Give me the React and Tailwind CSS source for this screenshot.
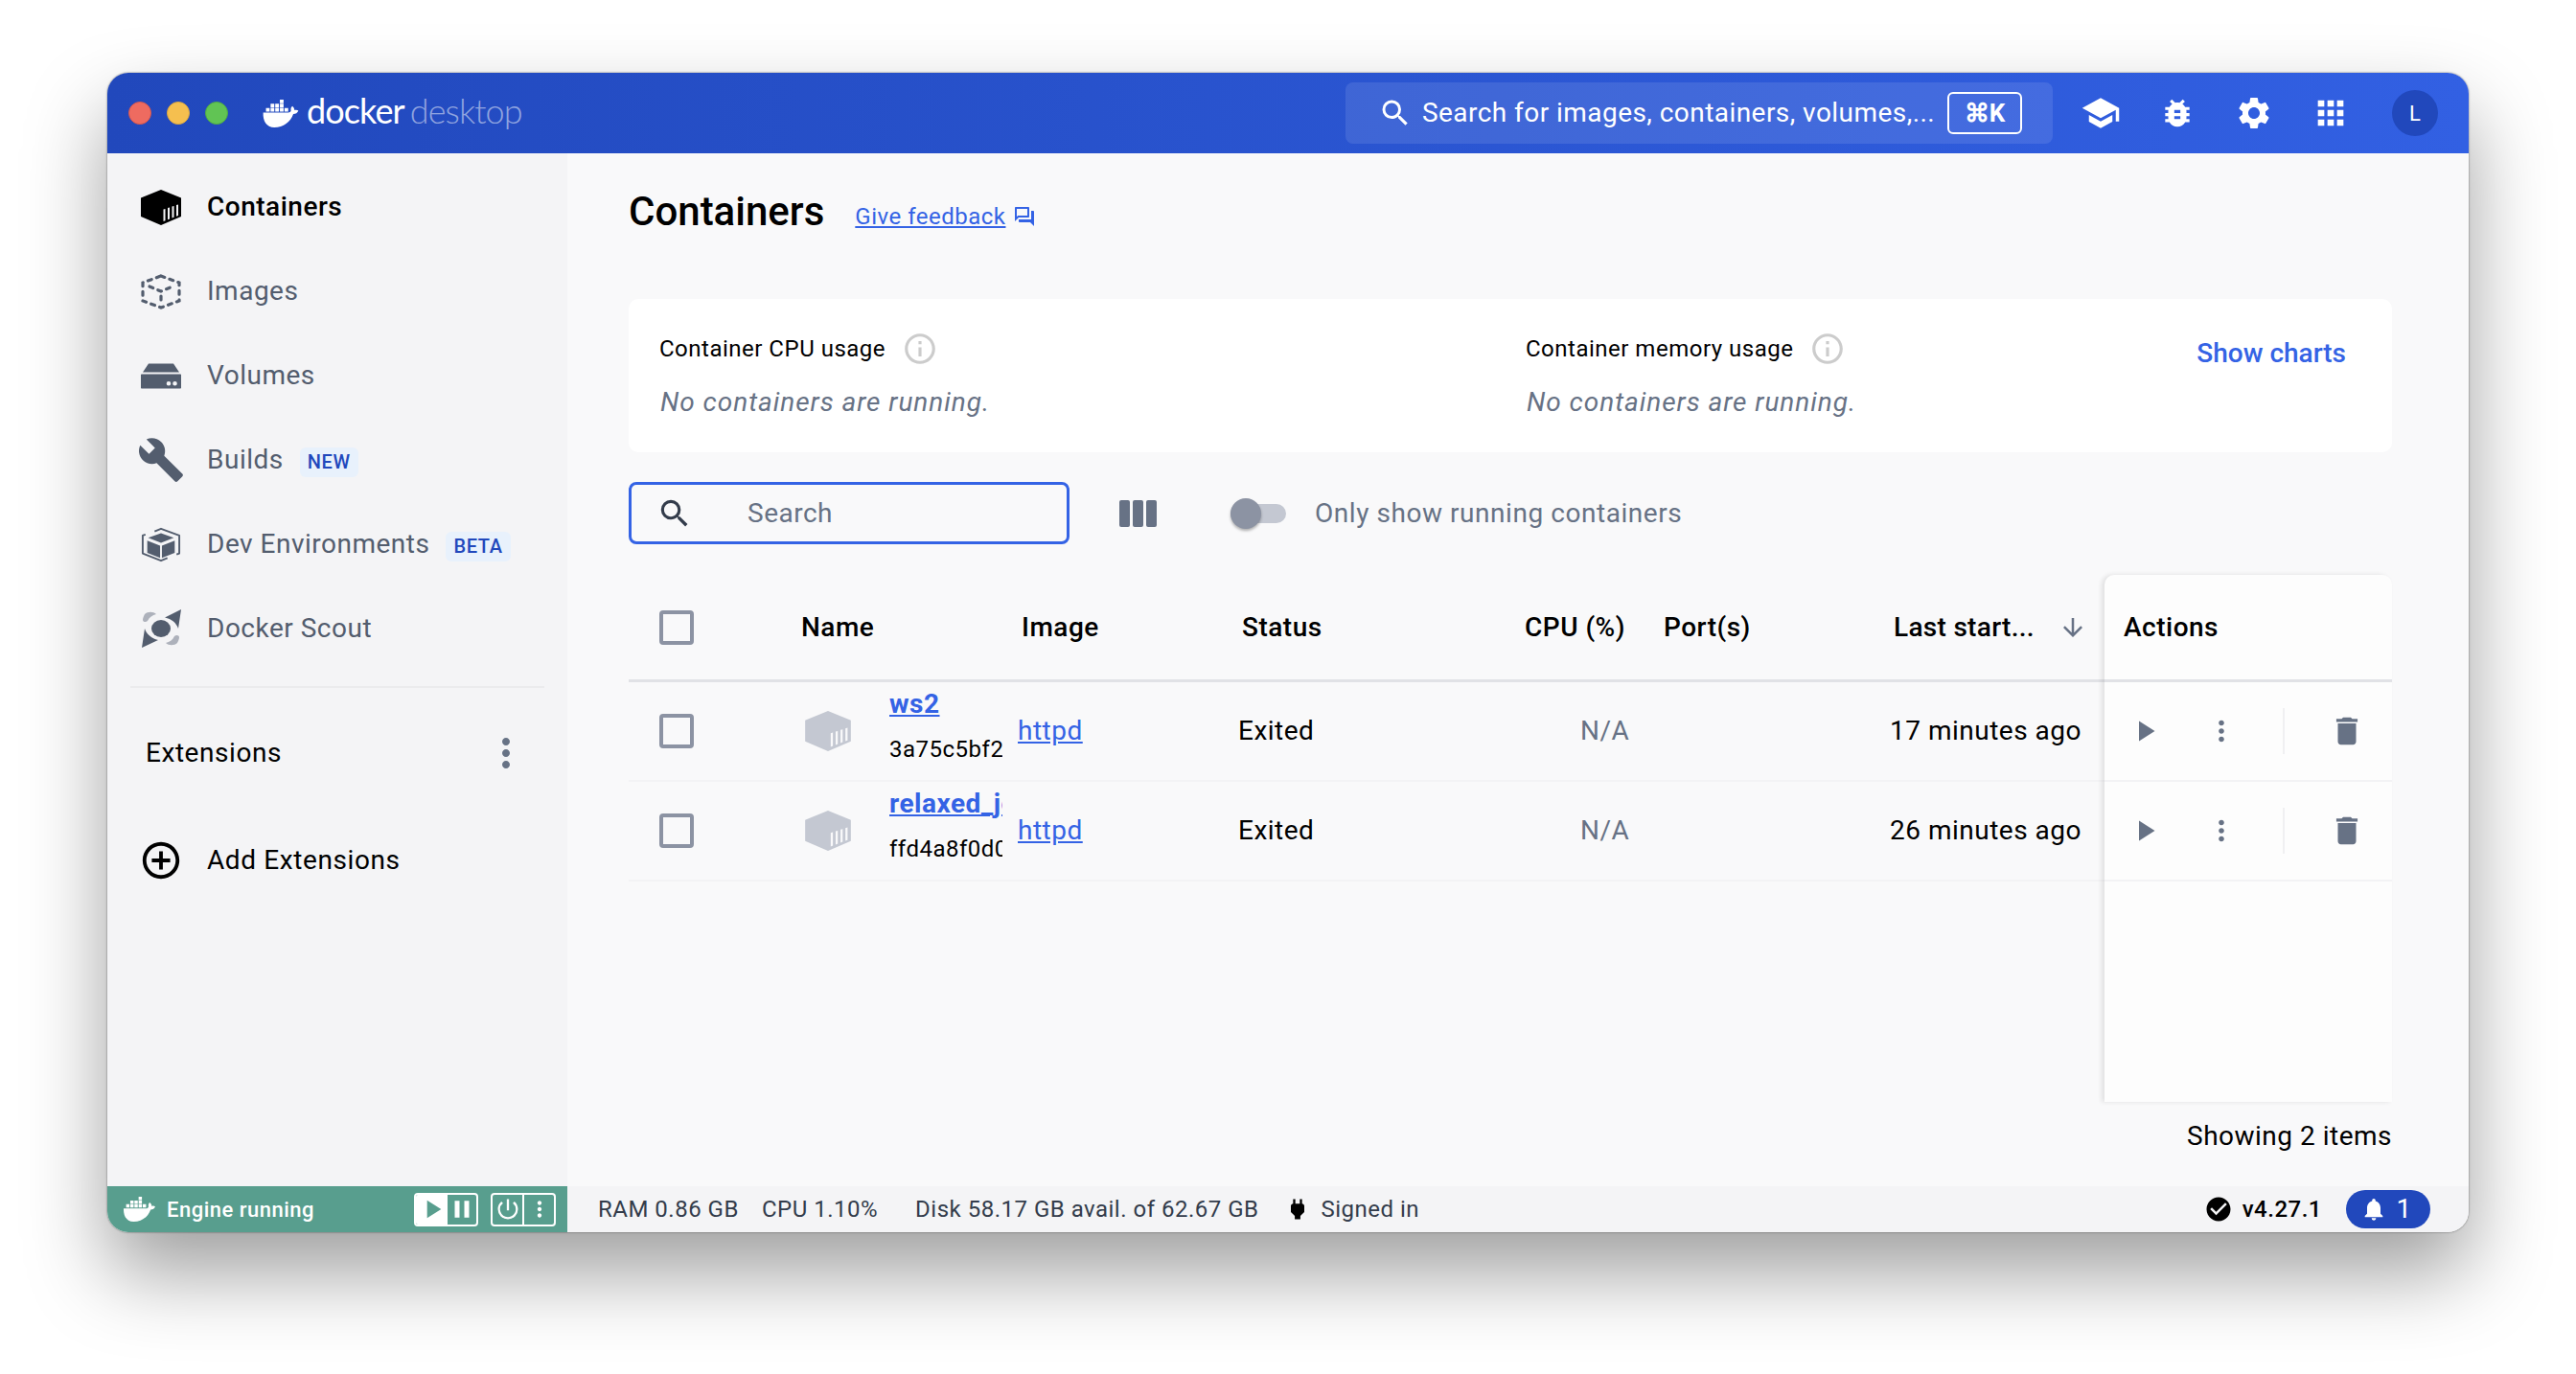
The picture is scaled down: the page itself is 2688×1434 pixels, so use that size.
import React from 'react';
import {
    MdSchool, MdBugReport, MdSettings, MdApps, MdSearch, MdBuild, MdMoreVert, MdAddCircleOutline,
    MdInfoOutline, MdOutlineForum, MdArrowDownward, MdPlayArrow, MdDelete, MdPause,
    MdPowerSettingsNew, MdPower, MdCheckCircle, MdNotifications
} from 'react-icons/md';

const ROWS = [
    { name: 'ws2', id: '3a75c5bf2', image: 'httpd', time: '17 minutes ago' },
    { name: 'relaxed_jones', id: 'ffd4a8f0d0c', image: 'httpd', time: '26 minutes ago' }
];

const COLS = 'grid grid-cols-[176px_230px_230px_294px_146px_238px_226px]';

function Whale({ className }) {
    return (
        <svg viewBox="0 0 40 30" className={className} fill="currentColor">
            <path d="M1 14h27c1.500 0 2.500-.5 3-2-.5-2 0-4 1.500-5 1.500 1.300 2.300 2.800 2.300 4.500 1.300-.6 2.800-.6 4.200.3-1 2.400-3 3.700-5.500 3.700C30.500 24 23 30 13 30 4.500 30 .5 23 1 14z" />
            <path d="M4 9h4v4H4zM9 9h4v4H9zM14 9h4v4h-4zM19 9h4v4h-4zM24 9h4v4h-4zM9 4.500h4v4H9zM14 4.500h4v4h-4zM19 4.500h4v4h-4zM19 0h4v4h-4z" />
        </svg>
    );
}

function ContainerIcon({ className, stripe }) {
    return (
        <svg viewBox="0 0 42 37" className={className}>
            <path d="M21 0l21 8.500V28L21 37 0 28V8.500z" fill="currentColor" />
            <path d="M23.500 33V20.500l2-.6V32.200zM28 31.300V19l2-.6V30.500zM32.500 29.500V17.500l2-.6V28.700zM37 27.700V16l2-.6V27z" fill={stripe} />
        </svg>
    );
}

function ImagesIcon({ className }) {
    return (
        <svg viewBox="0 0 42 37" className={className} fill="none" stroke="currentColor" strokeWidth="3.200" strokeLinecap="round" strokeDasharray="4 5.500">
            <path d="M21 2l19 7v19l-19 7-19-7V9z" />
            <path d="M9 13l12 5 12-5M21 23v9" />
        </svg>
    );
}

function VolumesIcon({ className }) {
    return (
        <svg viewBox="0 0 42 26" className={className} fill="currentColor">
            <path d="M8 0h26l6 9H2z" />
            <path fillRule="evenodd" d="M1 11h40c.6 0 1 .4 1 1v13c0 .6-.4 1-1 1H1c-.6 0-1-.4-1-1V12c0-.6.4-1 1-1zm28 7.500a2.300 2.300 0 1 0 0 4.600 2.300 2.300 0 0 0 0-4.600zm6.500 0a2.300 2.300 0 1 0 0 4.600 2.300 2.300 0 0 0 0-4.600z" />
        </svg>
    );
}

function DevEnvIcon({ className }) {
    return (
        <svg viewBox="0 0 44 37" className={className}>
            <path d="M22 6l14 5-14 5.500L8 11z" fill="currentColor" />
            <path d="M7 14l14 5.500V33L7 27.500zM37 14l-14 5.500V33l14-5.500z" fill="currentColor" />
            <path d="M15 4l7-3 20 7.500V28l-3 1.200M29 33l-7 3L2 28V8.500L5 7.300" fill="none" stroke="currentColor" strokeWidth="2" strokeLinejoin="round" />
        </svg>
    );
}

function ScoutIcon({ className }) {
    return (
        <svg viewBox="0 0 41 40" className={className}>
            <ellipse cx="20" cy="20" rx="10" ry="9" fill="#535d6e" />
            <path d="M24 8.500L41 0l-3 20c-2-6-7-10-14-11.500zM17 32L0 40l3-20c2 6 7 10 14 12z" fill="#535d6e" />
            <path d="M3 5c3-3 9-3 12 0-4 1-7 3-9 7-2 2-5 1-5-1 0-2 1-4 2-6zM37 35c-3 3-9 3-12 0 4-1 7-3 9-7 2-2 5-1 5 1 0 2-1 4-2 6z" fill="#adb1bb" />
        </svg>
    );
}

function NavItem({ icon, label, badge, active }) {
    return (
        <div className="flex items-center h-[88px] pl-[35px]">
            <div className={`w-[42px] flex justify-center ${active ? 'text-black' : 'text-[#535d6e]'}`}>{icon}</div>
            <span className={`ml-[27px] text-[28px] tracking-[0.5px] ${active ? 'font-medium text-black' : 'text-[#535d6e]'}`}>{label}</span>
            {badge && (
                <span className="ml-[17px] mt-[4px] h-[31px] px-[8px] flex items-center rounded-[6px] bg-[#e8f1fc] text-[20px] font-medium text-[#2148bc] tracking-[0.6px]">{badge}</span>
            )}
        </div>
    );
}

function Checkbox() {
    return <div className="w-[36px] h-[36px] rounded-[4px] border-[4px] border-[#8c93a3]" />;
}

export default function App() {
    return (
        <div className="w-[2688px] h-[1434px] bg-white pt-[76px] pl-[112px] overflow-hidden font-['Roboto',sans-serif]">
            <div className="w-[2464px] h-[1210px] flex flex-col rounded-[22px] overflow-hidden bg-[#f9f9fa] shadow-[0_42px_84px_rgba(0,0,0,0.38),0_0_2px_rgba(0,0,0,0.6)]">
                {/* Title bar */}
                <div className="h-[84px] shrink-0 flex items-center bg-gradient-to-r from-[#2148bc] to-[#3260e3]">
                    <div className="flex gap-[16px] pl-[22px]">
                        <div className="w-[24px] h-[24px] rounded-full bg-[#ee6b60] border border-[#d9574e]" />
                        <div className="w-[24px] h-[24px] rounded-full bg-[#f5bf4f] border border-[#dfa93e]" />
                        <div className="w-[24px] h-[24px] rounded-full bg-[#61c454] border border-[#4fad43]" />
                    </div>
                    <Whale className="ml-[35px] w-[40px] h-[29px] text-white" />
                    <div className="ml-[7px] text-[36px] leading-none tracking-[-0.9px] font-['Lato',sans-serif] mb-[6px]">
                        <span className="text-white">docker</span>
                        <span className="ml-[6px] font-light text-white/50">desktop</span>
                    </div>
                    <div className="ml-auto w-[738px] h-[64px] rounded-[8px] bg-white/10 flex items-center pl-[34px] pr-[32px]">
                        <MdSearch className="w-[36px] h-[36px] text-white" />
                        <span className="ml-[10px] flex-1 text-[28px] text-white tracking-[0.45px] whitespace-nowrap">Search for images, containers, volumes,...</span>
                        <span className="w-[78px] h-[44px] rounded-[6px] border-2 border-white text-white text-[26px] font-bold flex items-center justify-center">⌘K</span>
                    </div>
                    <div className="ml-[10px] flex items-center text-white">
                        <div className="w-[80px] flex justify-center"><MdSchool className="w-[42px] h-[42px]" /></div>
                        <div className="w-[80px] flex justify-center"><MdBugReport className="w-[38px] h-[38px]" /></div>
                        <div className="w-[80px] flex justify-center"><MdSettings className="w-[40px] h-[40px]" /></div>
                        <div className="w-[80px] flex justify-center"><MdApps className="w-[40px] h-[40px]" /></div>
                    </div>
                    <div className="ml-[24px] mr-[32px] w-[48px] h-[48px] rounded-full bg-[#2148bc] text-white text-[22px] flex items-center justify-center">L</div>
                </div>

                <div className="flex-1 flex min-h-0">
                    {/* Sidebar */}
                    <div className="w-[480px] shrink-0 bg-[#f4f4f6] pt-[12px]">
                        <NavItem active label="Containers" icon={<ContainerIcon className="w-[42px] h-[37px]" stripe="#f4f4f6" />} />
                        <NavItem label="Images" icon={<ImagesIcon className="w-[42px] h-[37px]" />} />
                        <NavItem label="Volumes" icon={<VolumesIcon className="w-[42px] h-[27px]" />} />
                        <NavItem label="Builds" badge="NEW" icon={<MdBuild className="w-[50px] h-[50px] shrink-0" />} />
                        <NavItem label="Dev Environments" badge="BETA" icon={<DevEnvIcon className="w-[43px] h-[37px]" />} />
                        <NavItem label="Docker Scout" icon={<ScoutIcon className="w-[41px] h-[40px]" />} />
                        <div className="mt-[16px] ml-[24px] w-[432px] h-[2px] bg-[#ebebed]" />
                        <div className="mt-[24px] h-[88px] flex items-center pl-[40px] pr-[40px]">
                            <span className="flex-1 text-[28px] text-black tracking-[0.55px]">Extensions</span>
                            <MdMoreVert className="w-[48px] h-[48px] text-[#677285]" />
                        </div>
                        <div className="mt-[24px] h-[88px] flex items-center pl-[33px]">
                            <MdAddCircleOutline className="w-[46px] h-[46px] text-black" />
                            <span className="ml-[25px] text-[28px] text-black tracking-[0.6px]">Add Extensions</span>
                        </div>
                    </div>

                    {/* Main content */}
                    <div className="flex-1 min-w-0 flex flex-col pl-[64px] pr-[80px]">
                        <div className="h-[120px] shrink-0 flex items-center">
                            <h1 className="text-[42px] font-medium text-black">Containers</h1>
                            <a className="ml-[32px] mt-[11px] text-[24px] text-[#3463e5] underline tracking-[0.5px]">Give feedback</a>
                            <MdOutlineForum className="ml-[8px] mt-[11px] w-[24px] h-[24px] text-[#3463e5]" />
                        </div>

                        <div className="mt-[32px] h-[160px] shrink-0 rounded-[10px] bg-white flex pl-[32px] pr-[48px]">
                            <div className="w-[904px] pt-[32px]">
                                <div className="flex items-center h-[40px]">
                                    <span className="text-[24px] text-black tracking-[0.5px]">Container CPU usage</span>
                                    <MdInfoOutline className="ml-[17px] w-[38px] h-[38px] text-[#cccccc]" />
                                </div>
                                <div className="mt-[15px] pl-[1px] text-[28px] italic text-[#677285] tracking-[0.95px]">No containers are running.</div>
                            </div>
                            <div className="flex-1 pt-[32px]">
                                <div className="flex items-center h-[40px]">
                                    <span className="text-[24px] text-black tracking-[0.5px]">Container memory usage</span>
                                    <MdInfoOutline className="ml-[17px] w-[38px] h-[38px] text-[#cccccc]" />
                                </div>
                                <div className="mt-[15px] pl-[1px] text-[28px] italic text-[#677285] tracking-[0.95px]">No containers are running.</div>
                            </div>
                            <div className="pt-[36px] text-[28px] font-medium text-[#3463e5]">Show charts</div>
                        </div>

                        <div className="mt-[31px] h-[65px] shrink-0 flex items-center">
                            <div className="w-[460px] h-full rounded-[8px] border-[3px] border-[#3463e5] flex items-center pl-[26px]">
                                <MdSearch className="w-[38px] h-[38px] text-[#333c4b]" />
                                <span className="ml-[57px] text-[28px] text-[#677285] tracking-[0.5px]">Search</span>
                            </div>
                            <div className="ml-[52px] flex gap-[3px]">
                                <div className="w-[11px] h-[28px] rounded-[2px] bg-[#677285]" />
                                <div className="w-[11px] h-[28px] rounded-[2px] bg-[#677285]" />
                                <div className="w-[11px] h-[28px] rounded-[2px] bg-[#677285]" />
                            </div>
                            <div className="ml-[77px] relative w-[58px] h-[20px] rounded-full bg-[#c4c8d2]">
                                <div className="absolute left-0 top-[-6px] w-[32px] h-[32px] rounded-full bg-[#8c93a3] shadow-[0_2px_3px_rgba(0,0,0,0.3)]" />
                            </div>
                            <span className="ml-[30px] text-[28px] text-[#677285] tracking-[0.55px]">Only show running containers</span>
                        </div>

                        {/* Table */}
                        <div className="mt-[32px] h-[550px] shrink-0 flex">
                            <div className="flex-1 min-w-0">
                                <div className={`${COLS} h-[112px] items-center border-b-[3px] border-[#e1e2e6] text-[28px] font-medium text-black tracking-[0.5px]`}>
                                    <div className="pl-[32px]"><Checkbox /></div>
                                    <div className="pl-[4px]">Name</div>
                                    <div className="pl-[4px]">Image</div>
                                    <div className="pl-[4px]">Status</div>
                                    <div className="pl-[5px]">CPU (%)</div>
                                    <div className="pl-[4px]">Port(s)</div>
                                    <div className="flex items-center pl-[6px]">
                                        <span className="tracking-[0.3px]">Last start...</span>
                                        <MdArrowDownward className="ml-[25px] w-[30px] h-[30px] text-[#677285]" />
                                    </div>
                                </div>
                                {ROWS.map((row) => (
                                    <div key={row.id} className={`${COLS} h-[104px] items-center border-b-2 border-[#f3f3f5] text-[28px] text-black tracking-[0.5px]`}>
                                        <div className="pl-[32px]"><Checkbox /></div>
                                        <div className="flex items-center">
                                            <ContainerIcon className="ml-[8px] w-[48px] h-[42px] text-[#c4c8d2]" stripe="#f9f9fa" />
                                            <div className="ml-[40px] w-[118px] overflow-hidden whitespace-nowrap pb-[12px]">
                                                <div className="font-bold text-[#3463e5] underline leading-[36px]">{row.name}</div>
                                                <div className="text-[24px] mt-[14px] leading-[30px]">{row.id}</div>
                                            </div>
                                        </div>
                                        <div><a className="text-[#3463e5] underline">{row.image}</a></div>
                                        <div>Exited</div>
                                        <div className="pl-[63px] text-[#677285]">N/A</div>
                                        <div />
                                        <div className="pr-[24px] text-right whitespace-nowrap">{row.time}</div>
                                    </div>
                                ))}
                            </div>

                            {/* Actions */}
                            <div className="relative w-[300px] shrink-0 rounded-t-[10px] bg-[#fdfdfd] shadow-[-3px_0_5px_rgba(0,0,0,0.1)]">
                                <div className="h-[112px] flex items-center pl-[20px] border-b-[3px] border-[#e1e2e6] text-[28px] font-medium text-black tracking-[0.5px]">Actions</div>
                                {ROWS.map((row) => (
                                    <div key={row.id} className="h-[104px] flex items-center border-b-2 border-[#f3f3f5] text-[#677285]">
                                        <MdPlayArrow className="ml-[24px] w-[36px] h-[36px]" />
                                        <MdMoreVert className="ml-[45px] w-[34px] h-[34px]" />
                                        <div className="ml-[47px] w-[2px] h-[48px] bg-[#f0f0f2]" />
                                        <MdDelete className="ml-[46px] w-[38px] h-[38px]" />
                                    </div>
                                ))}
                            </div>
                        </div>

                        <div className="flex-1 flex items-center justify-end pb-[16px] text-[28px] text-black tracking-[0.5px]">Showing 2 items</div>
                    </div>
                </div>

                {/* Status bar */}
                <div className="h-[48px] shrink-0 flex items-center bg-[#f4f4f6] text-[24px] tracking-[0.5px] text-[#333c4b]">
                    <div className="w-[480px] h-full shrink-0 bg-[#589e8e] flex items-center pl-[16px] text-white">
                        <Whale className="w-[35px] h-[26px]" />
                        <span className="ml-[11px] w-[258px] text-[22px] font-medium whitespace-nowrap">Engine running</span>
                        <div className="flex h-[35px] w-[67px] rounded-[4px] border-2 border-white overflow-hidden">
                            <div className="w-[33px] bg-white flex items-center justify-center"><MdPlayArrow className="w-[32px] h-[32px] text-[#589e8e]" /></div>
                            <div className="flex-1 flex items-center justify-center"><MdPause className="w-[30px] h-[30px]" /></div>
                        </div>
                        <div className="ml-[13px] flex h-[35px] w-[68px] rounded-[4px] border-2 border-white">
                            <div className="w-[33px] border-r-2 border-white flex items-center justify-center"><MdPowerSettingsNew className="w-[28px] h-[28px]" /></div>
                            <div className="flex-1 flex items-center justify-center"><MdMoreVert className="w-[26px] h-[26px]" /></div>
                        </div>
                    </div>
                    <span className="ml-[32px]">RAM 0.86 GB</span>
                    <span className="ml-[24px]">CPU 1.10%</span>
                    <span className="ml-[39px]">Disk 58.17 GB avail. of 62.67 GB</span>
                    <MdPower className="ml-[26px] w-[28px] h-[28px] text-black" />
                    <span className="ml-[11px]">Signed in</span>
                    <MdCheckCircle className="ml-auto w-[30px] h-[30px] text-black" />
                    <span className="ml-[10px] font-medium text-black">v4.27.1</span>
                    <div className="ml-[25px] mr-[40px] w-[88px] h-[40px] rounded-full bg-[#2148bc] text-white flex items-center justify-center gap-[9px] pr-[4px]">
                        <MdNotifications className="w-[28px] h-[28px]" />
                        <span className="text-[28px] leading-none">1</span>
                    </div>
                </div>
            </div>
        </div>
    );
}
